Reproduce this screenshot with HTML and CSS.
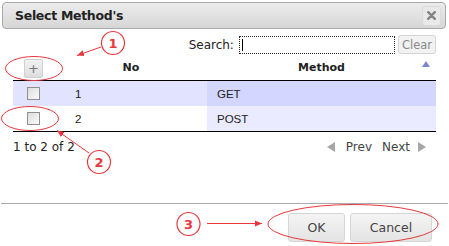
FILE: index.html
```html
<!DOCTYPE html>
<html>
  <head>
    <title>Select Method's</title>
    <meta name="viewport" content="width=device-width, initial-scale=1.0"/>
    <link rel="stylesheet" href="styles.css">
  </head>
  <body>

      <div class="dialog">
          <div class="titlebar">
              <span class="title">Select Method's</span>
              <span class="close">
                  <svg width="9" height="9" viewBox="0 0 9 9">
                      <path d="M1.2,1.2 L7.8,7.8 M7.8,1.2 L1.2,7.8" stroke="#858585" stroke-width="2.4" stroke-linecap="round"/>
                  </svg>
              </span>
          </div>

          <div class="content">
              <div class="search-row">
                  <label for="search">Search:</label>
                  <input id="search" type="text" />
                  <button class="clear">Clear</button>
              </div>

              <table class="grid">
                  <thead>
                      <tr>
                          <th class="col-check"><span class="add">+</span></th>
                          <th class="col-no">No</th>
                          <th class="col-method sorted">Method<span class="sort-asc"></span></th>
                      </tr>
                  </thead>
                  <tbody>
                      <tr class="odd">
                          <td class="col-check"><span class="checkbox"></span></td>
                          <td class="col-no">1</td>
                          <td class="col-method">GET</td>
                      </tr>
                      <tr class="even">
                          <td class="col-check"><span class="checkbox"></span></td>
                          <td class="col-no">2</td>
                          <td class="col-method">POST</td>
                      </tr>
                  </tbody>
              </table>

              <div class="info-row">
                  <span class="info">1 to 2 of 2</span>
                  <span class="pager">
                      <span class="arrow-left"></span>
                      <span class="page-link">Prev</span>
                      <span class="page-link">Next</span>
                      <span class="arrow-right"></span>
                  </span>
              </div>
          </div>

          <div class="footer">
              <button class="btn btn-ok">OK</button>
              <button class="btn btn-cancel">Cancel</button>
          </div>

          <!-- callouts drawn on top of the screenshot -->
          <svg class="callouts" width="449" height="246" viewBox="0 0 449 246">
              <defs>
                  <marker id="head" markerWidth="8" markerHeight="8" refX="7" refY="4" orient="auto" markerUnits="userSpaceOnUse">
                      <path d="M0,1 L7,4 L0,7 Z" fill="#e8383d"/>
                  </marker>
              </defs>

              <ellipse cx="34" cy="68.5" rx="28.5" ry="12" />
              <line x1="101" y1="47" x2="77" y2="55.5" marker-end="url(#head)" />
              <circle cx="113" cy="43" r="11.5" />
              <text x="113" y="48">1</text>

              <ellipse cx="30" cy="118.5" rx="28.5" ry="12" />
              <line x1="89" y1="153" x2="57" y2="130.5" marker-end="url(#head)" />
              <circle cx="99" cy="162" r="11.5" />
              <text x="99" y="167">2</text>

              <ellipse cx="353" cy="224" rx="85" ry="19.5" />
              <line x1="207" y1="223.5" x2="262" y2="223.5" marker-end="url(#head)" />
              <circle cx="188.5" cy="224" r="11.5" />
              <text x="188.5" y="229">3</text>
          </svg>
      </div>

  </body>
</html>
```

FILE: styles.css
```css
html, body {
    margin: 0;
    background: #fff;
}

body {
    font-family: "DejaVu Sans", Verdana, sans-serif;
    font-size: 12px;
    color: #222;
}

.dialog {
    position: relative;
    width: 449px;
    height: 246px;

    display: flex;
    flex-direction: column;
}

.titlebar {
    height: 25px;
    margin: 2px 3px 0 2px;
    padding: 0 4px 0 12px;

    display: flex;
    align-items: center;
    justify-content: space-between;

    border: 1px solid #aaa;
    border-radius: 4px;

    background: linear-gradient(to bottom, #ececec, #d6d6d6);
}

.title {
    font-size: 12.5px;
    font-weight: 700;
    letter-spacing: -0.3px;
    color: #222;
}

.close {
    width: 17px;
    height: 18px;

    display: flex;
    align-items: center;
    justify-content: center;

    border: 1px solid #dadada;
    border-radius: 3px;

    background: #e9e9e9;
}

.content {
    flex: 1;
    padding: 0 13px;
}

.search-row {
    margin-top: 6px;

    display: flex;
    justify-content: flex-end;
    align-items: center;
}

.search-row label {
    margin-right: 5px;
    font-size: 12px;
    color: #222;
}

#search {
    box-sizing: border-box;
    width: 156px;
    height: 18px;
    padding: 0;

    border: 1px dotted #222;
    outline: 0;

    background: linear-gradient(#000, #000) 2px 2px / 1px 12px no-repeat, #fff;
}

.clear {
    box-sizing: border-box;
    height: 19px;
    margin-left: 3px;
    padding: 0 3px;

    border: 1px solid #d4d4d4;
    border-radius: 3px;

    font-family: "DejaVu Sans", Verdana, sans-serif;
    font-size: 11.5px;
    color: #888;

    background: #f2f2f2;
}

.grid {
    width: 423px;
    margin-top: 1px;

    border-collapse: collapse;
    border-bottom: 1px solid #000;
}

.grid th {
    height: 25px;
    padding: 0;

    border-bottom: 1px solid #000;

    font-size: 11px;
    font-weight: 700;
    color: #222;
}

.grid td {
    height: 25px;
    padding: 0;

    font-family: "Liberation Sans", Arial, sans-serif;
    font-size: 11.5px;
    color: #222;
}

.col-check {
    width: 42px;
    text-align: center;
}

.col-no {
    width: 152px;
}

td.col-no {
    padding-left: 20px !important;
    box-sizing: border-box;
}

td.col-method {
    padding-left: 10px !important;
}

th.col-method {
    position: relative;
}

.odd td {
    background: #e2e4ff;
}

.odd td.col-method {
    background: #d3d6ff;
}

.even td {
    background: #fff;
}

.even td.col-method {
    background: #eaebff;
}

.add {
    box-sizing: border-box;
    width: 19px;
    height: 19px;
    margin-left: 11px;
    margin-top: 1px;

    display: flex;
    align-items: center;
    justify-content: center;

    border: 1px solid #d0d0d0;
    border-radius: 2px;

    font-size: 13px;
    font-weight: 400;
    color: #777;

    background: linear-gradient(to bottom, #f2f2f2, #dddddd);
}

.checkbox {
    box-sizing: border-box;
    width: 13px;
    height: 13px;
    margin-left: 14px;

    display: block;

    border: 1px solid #8f8f8f;

    background: linear-gradient(135deg, #dcdcdc, #fbfbfb);
}

.sort-asc {
    position: absolute;
    right: 6px;
    top: 6px;

    width: 0;
    height: 0;

    border-left: 4px solid transparent;
    border-right: 4px solid transparent;
    border-bottom: 6px solid #7e85d0;
}

.info-row {
    margin-top: 8px;
    padding-right: 10px;

    display: flex;
    justify-content: space-between;
    align-items: center;
}

.info {
    font-size: 12px;
    color: #222;
}

.pager {
    display: flex;
    align-items: center;
}

.page-link {
    margin: 0 5px;
    font-size: 12px;
    color: #444;
}

.arrow-left,
.arrow-right {
    width: 0;
    height: 0;

    border-top: 5px solid transparent;
    border-bottom: 5px solid transparent;
}

.arrow-left {
    margin-right: 6px;
    border-right: 8px solid #a6a6a6;
}

.arrow-right {
    margin-left: 3px;
    border-left: 8px solid #a6a6a6;
}

.footer {
    height: 43px;
    margin: 0 1px;
    padding: 9px 16px 0 0;
    box-sizing: border-box;

    display: flex;
    justify-content: flex-end;
    align-items: flex-start;
    gap: 5px;

    border-top: 1px solid #aaa;
}

.btn {
    height: 29px;

    border: 1px solid #d6d6d6;
    border-radius: 3px;

    font-family: "DejaVu Sans", Verdana, sans-serif;
    font-size: 12.5px;
    color: #444;

    background: linear-gradient(to bottom, #f4f4f4, #e4e4e4);
}

.btn-ok {
    width: 57px;
}

.btn-cancel {
    width: 82px;
}

.callouts {
    position: absolute;
    left: 0;
    top: 0;
    pointer-events: none;
}

.callouts ellipse,
.callouts line {
    fill: none;
    stroke: #e8383d;
    stroke-width: 1;
}

.callouts circle {
    fill: #fff;
    stroke: #e8383d;
    stroke-width: 1.2;
}

.callouts text {
    font-family: "DejaVu Sans", Verdana, sans-serif;
    font-size: 13px;
    font-weight: 700;
    fill: #e8383d;
    text-anchor: middle;
}
```
